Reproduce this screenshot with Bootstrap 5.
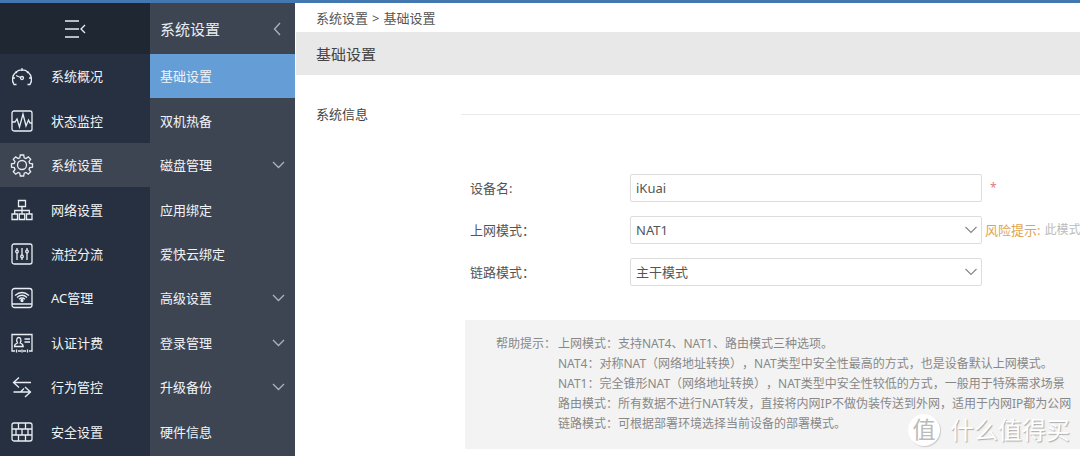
<!DOCTYPE html>
<html lang="zh-CN">
<head>
<meta charset="utf-8">
<meta name="viewport" content="width=device-width, initial-scale=1">
<title>基础设置 - 系统设置</title>
<link href="https://cdn.jsdelivr.net/npm/bootstrap@5.3.0/dist/css/bootstrap.min.css" rel="stylesheet">
<style>
  body { font-family: "Noto Sans", "Noto Sans CJK SC", sans-serif; font-size: 12px; line-height: 20px; color: #555; text-spacing-trim: space-all; }
  .shell { border-top: 3px solid #4377b0; min-height: 100vh; }
  .side-main { width: 150px; background: #263040; }
  .side-sub { width: 145px; background: #3d4553; margin-right: 1px; }
  .side-head { height: 51px; }
  .side-main .side-head { background: #1e2732; }
  .side-title { font-size: 15px; color: #e9edf2; }
  .side-link { color: #f1f4f7; font-size: 13px; min-height: 44px; flex: 1 1 0; text-decoration: none; }
  .side-link:hover { color: #fff; }
  .side-list { padding-bottom: 2px; }
  .side-main .side-link { padding-left: 10px; gap: 17px; }
  .side-main .side-link.active { background: #3d4553; }
  .side-sub .side-link, .side-sub .side-head { padding: 0 10px; }
  .side-sub .side-link.active { background: #659dd6; }
  .icon-btn { background: none; border: 0; padding: 0; line-height: 0; }
  svg { fill: none; stroke: #e9eef4; stroke-width: 1.3; flex: none; }
  .side-sub svg { stroke: #aab2bf; }
  .crumbs { height: 29px; padding-left: 20px; font-size: 13px; }
  .crumbs a { color: #555; text-decoration: none; }
  .page-title { height: 43px; padding-left: 20px; background: #e8e8e8; font-size: 15px; color: #444; }
  .section-title { font-size: 13px; width: 145px; }
  .section-head { padding: 30px 0 0 20px; color: #444; }
  .section-head hr { color: #aaa; }
  .fields { padding: 49px 0 0 174px; gap: 14px; }
  .field-label { width: 160px; font-size: 13px; }
  .field-box { width: 352px; height: 28px; padding: 0 5px; font-size: 13px; line-height: 20px; border: 1px solid #ddd; border-radius: 2px; color: #555; background-color: #fff; flex: none; }
  select.field-box { --bs-form-select-bg-img: url("data:image/svg+xml,%3Csvg xmlns='http://www.w3.org/2000/svg' viewBox='0 0 12 8'%3E%3Cpath fill='none' stroke='%23888' stroke-width='1.2' d='M.5 1 6 6.5 11.5 1'/%3E%3C/svg%3E"); background-size: 12px 8px; background-position: right 4px center; }
  .required { color: #dc7b85; padding-left: 8px; }
  .risk { color: #dfa450; font-size: 13px; padding-left: 3px; }
  .risk-note { color: #bbb; padding-left: 4px; }
  .help { margin: 34px 0 0 169px; padding: 14px 0 15px 31px; background: #f3f3f3; color: #888; }
  .help dt { width: 62px; font-weight: 400; }
  .watermark { right: 10px; bottom: 8px; gap: 10px; color: #fff; font-size: 24px; line-height: 36px; text-shadow: 1px 1px 1px #aaa; }
  .watermark-disc { width: 32px; height: 32px; line-height: 30px; background: #fff; color: #bbb; font-size: 23px; text-shadow: none; box-shadow: 1px 1px 1px #ccc; }
</style>
</head>
<body>
<div class="shell d-flex overflow-hidden position-relative">
  <nav class="side-main d-flex flex-column flex-shrink-0" aria-label="主菜单">
    <div class="side-head d-flex align-items-center justify-content-center">
      <button class="icon-btn" type="button" aria-label="收起菜单"><svg width="22" height="18" viewBox="0 0 22 18"><path d="M1 1h14M1 9h14M1 17h14M21 5l-4 4 4 4"/></svg></button>
    </div>
    <div class="side-list d-flex flex-column flex-fill">
      <a class="side-link d-flex align-items-center" href="#"><svg width="24" height="24" viewBox="0 0 24 24"><path d="M6.500 20.500H4a9.500 9.500 0 1 1 16 0h-2.500M12 4v3M5.500 7.500 7 9M18.500 7.500 17 9M2.500 14H5M21.500 14H19M10.500 13.500 6 11.500"/><circle cx="12" cy="14" r="1.500"/></svg>系统概况</a>
      <a class="side-link d-flex align-items-center" href="#"><svg width="24" height="24" viewBox="0 0 24 24"><rect x="2" y="2" width="20" height="20" rx="2"/><path d="M2 13h3l2-3 2.500 8 3.500-13 3 12 2.500-6 1.500 3h2"/></svg>状态监控</a>
      <a class="side-link active d-flex align-items-center" href="#" aria-current="true"><svg width="24" height="24" viewBox="0 0 24 24"><circle cx="12" cy="12" r="4.500"/><path d="M10.300 2h3.400l.5 2.900 1.700.7 2.400-1.700 2.400 2.400L19 8.700l.7 1.600 2.800.5v3.400l-2.800.5-.7 1.700 1.700 2.400-2.400 2.400-2.400-1.700-1.700.7-.5 2.800h-3.400l-.5-2.800-1.700-.7-2.400 1.700-2.400-2.400L5 16.400l-.7-1.700-2.800-.5v-3.400l2.800-.5L5 8.700 3.300 6.300l2.400-2.400 2.400 1.700 1.700-.7z"/></svg>系统设置</a>
      <a class="side-link d-flex align-items-center" href="#"><svg width="24" height="24" viewBox="0 0 24 24"><path d="M8.500 2.500h7v6h-7zM2 16h5.500v5.500H2zM9.300 16h5.400v5.500H9.300zM16.500 16H22v5.500h-5.500zM12 8.500V16M4.700 16v-3.500h14.600V16"/></svg>网络设置</a>
      <a class="side-link d-flex align-items-center" href="#"><svg width="24" height="24" viewBox="0 0 24 24"><rect x="2" y="2" width="20" height="20" rx="2"/><path d="M7 6v2M7 11v7M12 6v7M12 16v2M17 6v2M17 11v7"/><circle cx="7" cy="9.500" r="1.300"/><circle cx="12" cy="14.500" r="1.300"/><circle cx="17" cy="9.500" r="1.300"/></svg>流控分流</a>
      <a class="side-link d-flex align-items-center" href="#"><svg width="24" height="24" viewBox="0 0 24 24"><rect x="2" y="2.500" width="20" height="19" rx="2.500"/><path d="M2 18h20M5 9.500q7-6 14 0M7 11.500q5-4.500 10 0M9 13.300q3-2.600 6 0"/><circle cx="12" cy="14.500" r="1" fill="#e3e8ee"/></svg>AC管理</a>
      <a class="side-link d-flex align-items-center" href="#"><svg width="24" height="24" viewBox="0 0 24 24"><path d="M5 20H2V3.500h20V20h-3M8 20h3M13 20h3M6.500 18.500v3M17.500 18.500v3M12 18.500v3M4.500 15.500c0-2.500 1.500-3 3-3.500-2-4 0-5.500 1.300-5.500S12 8 10.200 12c1.500.5 3 1 3 3.500zM14.500 8H20M14.500 11H20"/></svg>认证计费</a>
      <a class="side-link d-flex align-items-center" href="#"><svg width="24" height="24" viewBox="0 0 24 24"><path d="M21 7.500H4M9 2.500 3.500 7.500 9 12.500M3.500 17H20M15 12l5.500 5-5.500 5M10.500 17l3.500-3.500"/></svg>行为管控</a>
      <a class="side-link d-flex align-items-center" href="#"><svg width="24" height="24" viewBox="0 0 24 24"><rect x="2" y="3" width="20" height="18" rx="2"/><path d="M2 9h20M2 15h20M8.500 3v6M15.500 3v6M6 9v6M12 9v6M18 9v6M8.500 15v6M15.500 15v6"/></svg>安全设置</a>
    </div>
  </nav>
  <nav class="side-sub d-flex flex-column flex-shrink-0" aria-label="系统设置">
    <div class="side-head d-flex align-items-center justify-content-between">
      <span class="side-title">系统设置</span>
      <button class="icon-btn pe-1" type="button" aria-label="收起"><svg width="8" height="14" viewBox="0 0 8 14"><path d="M7 1 1.500 7 7 13"/></svg></button>
    </div>
    <div class="side-list d-flex flex-column flex-fill">
      <a class="side-link active d-flex align-items-center" href="#" aria-current="page">基础设置</a>
      <a class="side-link d-flex align-items-center" href="#">双机热备</a>
      <a class="side-link d-flex align-items-center justify-content-between" href="#">磁盘管理<svg width="13" height="8" viewBox="0 0 13 8"><path d="M1 1l5.500 5.500L12 1"/></svg></a>
      <a class="side-link d-flex align-items-center" href="#">应用绑定</a>
      <a class="side-link d-flex align-items-center" href="#">爱快云绑定</a>
      <a class="side-link d-flex align-items-center justify-content-between" href="#">高级设置<svg width="13" height="8" viewBox="0 0 13 8"><path d="M1 1l5.500 5.500L12 1"/></svg></a>
      <a class="side-link d-flex align-items-center justify-content-between" href="#">登录管理<svg width="13" height="8" viewBox="0 0 13 8"><path d="M1 1l5.500 5.500L12 1"/></svg></a>
      <a class="side-link d-flex align-items-center justify-content-between" href="#">升级备份<svg width="13" height="8" viewBox="0 0 13 8"><path d="M1 1l5.500 5.500L12 1"/></svg></a>
      <a class="side-link d-flex align-items-center" href="#">硬件信息</a>
    </div>
  </nav>
  <main class="flex-fill overflow-hidden text-nowrap">
    <div class="crumbs d-flex align-items-center gap-1"><a href="#">系统设置</a><span>&gt;</span><span>基础设置</span></div>
    <h1 class="page-title d-flex align-items-center fw-normal m-0">基础设置</h1>
    <div class="section-head d-flex align-items-center">
      <h2 class="section-title fw-normal lh-base m-0">系统信息</h2>
      <hr class="flex-fill m-0">
    </div>
    <form class="fields d-flex flex-column">
      <div class="d-flex align-items-center">
        <label class="field-label flex-shrink-0" for="devname">设备名:</label>
        <input class="form-control field-box" id="devname" type="text" value="iKuai">
        <span class="required">*</span>
      </div>
      <div class="d-flex align-items-center">
        <label class="field-label flex-shrink-0" for="netmode">上网模式：</label>
        <select class="form-select field-box" id="netmode"><option>NAT1</option><option>NAT4</option><option>路由模式</option></select>
        <span class="risk">风险提示:</span><span class="risk-note">此模式</span>
      </div>
      <div class="d-flex align-items-center">
        <label class="field-label flex-shrink-0" for="linkmode">链路模式：</label>
        <select class="form-select field-box" id="linkmode"><option>主干模式</option></select>
      </div>
    </form>
    <dl class="help d-flex mb-0">
      <dt class="flex-shrink-0">帮助提示：</dt>
      <dd class="m-0">
        <div>上网模式：支持NAT4、NAT1、路由模式三种选项。</div>
        <div>NAT4：对称NAT（网络地址转换），NAT类型中安全性最高的方式，也是设备默认上网模式。</div>
        <div>NAT1：完全锥形NAT（网络地址转换），NAT类型中安全性较低的方式，一般用于特殊需求场景</div>
        <div>路由模式：所有数据不进行NAT转发，直接将内网IP不做伪装传送到外网，适用于内网IP都为公网</div>
        <div>链路模式：可根据部署环境选择当前设备的部署模式。</div>
      </dd>
    </dl>
  </main>
  <div class="watermark position-absolute d-flex align-items-center"><span class="watermark-disc rounded-circle text-center">值</span><span>什么值得买</span></div>
</div>
<script src="https://cdn.jsdelivr.net/npm/bootstrap@5.3.0/dist/js/bootstrap.bundle.min.js"></script>
</body>
</html>
